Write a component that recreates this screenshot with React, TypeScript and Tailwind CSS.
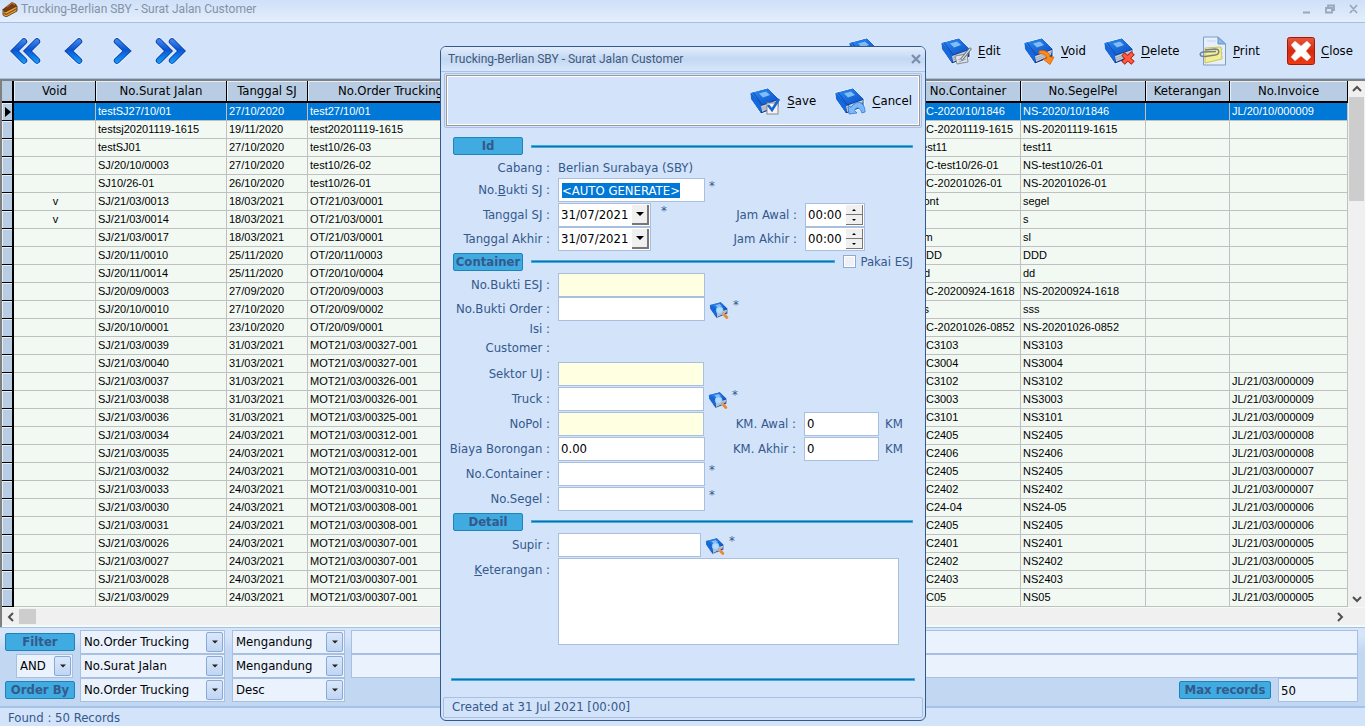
import { useEffect, useRef, type ReactNode } from "react";

const columns = [
  { label: "Void", width: "w-[82px]" },
  { label: "No.Surat Jalan", width: "w-[131px]" },
  { label: "Tanggal SJ", width: "w-[81px]" },
  { label: "No.Order Trucking", width: "w-[166px]" },
  { label: "", width: "w-auto" },
  { label: "No.Container", width: "w-[105px]" },
  { label: "No.SegelPel", width: "w-[125px]" },
  { label: "Keterangan", width: "w-[84px]" },
  { label: "No.Invoice", width: "w-[118px]" },
];

// void, no surat jalan, tanggal, no order, no container, no segel, no invoice
const rows = [
  ["", "testSJ27/10/01", "27/10/2020", "test27/10/01", "NC-2020/10/1846", "NS-2020/10/1846", "JL/20/10/000009"],
  ["", "testsj20201119-1615", "19/11/2020", "test20201119-1615", "NC-20201119-1615", "NS-20201119-1615", ""],
  ["", "testSJ01", "27/10/2020", "test10/26-03", "test11", "test11", ""],
  ["", "SJ/20/10/0003", "27/10/2020", "test10/26-02", "NC-test10/26-01", "NS-test10/26-01", ""],
  ["", "SJ10/26-01", "26/10/2020", "test10/26-01", "NC-20201026-01", "NS-20201026-01", ""],
  ["v", "SJ/21/03/0013", "18/03/2021", "OT/21/03/0001", "cont", "segel", ""],
  ["v", "SJ/21/03/0014", "18/03/2021", "OT/21/03/0001", "s", "s", ""],
  ["", "SJ/21/03/0017", "18/03/2021", "OT/21/03/0001", "cm", "sl", ""],
  ["", "SJ/20/11/0010", "25/11/2020", "OT/20/11/0003", "DDD", "DDD", ""],
  ["", "SJ/20/11/0014", "25/11/2020", "OT/20/10/0004", "dd", "dd", ""],
  ["", "SJ/20/09/0003", "27/09/2020", "OT/20/09/0003", "NC-20200924-1618", "NS-20200924-1618", ""],
  ["", "SJ/20/10/0010", "27/10/2020", "OT/20/09/0002", "ss", "sss", ""],
  ["", "SJ/20/10/0001", "23/10/2020", "OT/20/09/0001", "NC-20201026-0852", "NS-20201026-0852", ""],
  ["", "SJ/21/03/0039", "31/03/2021", "MOT21/03/00327-001", "NC3103", "NS3103", ""],
  ["", "SJ/21/03/0040", "31/03/2021", "MOT21/03/00327-001", "NC3004", "NS3004", ""],
  ["", "SJ/21/03/0037", "31/03/2021", "MOT21/03/00326-001", "NC3102", "NS3102", "JL/21/03/000009"],
  ["", "SJ/21/03/0038", "31/03/2021", "MOT21/03/00326-001", "NC3003", "NS3003", "JL/21/03/000009"],
  ["", "SJ/21/03/0036", "31/03/2021", "MOT21/03/00325-001", "NC3101", "NS3101", "JL/21/03/000009"],
  ["", "SJ/21/03/0034", "24/03/2021", "MOT21/03/00312-001", "NC2405", "NS2405", "JL/21/03/000008"],
  ["", "SJ/21/03/0035", "24/03/2021", "MOT21/03/00312-001", "NC2406", "NS2406", "JL/21/03/000008"],
  ["", "SJ/21/03/0032", "24/03/2021", "MOT21/03/00310-001", "NC2405", "NS2405", "JL/21/03/000007"],
  ["", "SJ/21/03/0033", "24/03/2021", "MOT21/03/00310-001", "NC2402", "NS2402", "JL/21/03/000007"],
  ["", "SJ/21/03/0030", "24/03/2021", "MOT21/03/00308-001", "NC24-04", "NS24-05", "JL/21/03/000006"],
  ["", "SJ/21/03/0031", "24/03/2021", "MOT21/03/00308-001", "NC2405", "NS2405", "JL/21/03/000006"],
  ["", "SJ/21/03/0026", "24/03/2021", "MOT21/03/00307-001", "NC2401", "NS2401", "JL/21/03/000005"],
  ["", "SJ/21/03/0027", "24/03/2021", "MOT21/03/00307-001", "NC2402", "NS2402", "JL/21/03/000005"],
  ["", "SJ/21/03/0028", "24/03/2021", "MOT21/03/00307-001", "NC2403", "NS2403", "JL/21/03/000005"],
  ["", "SJ/21/03/0029", "24/03/2021", "MOT21/03/00307-001", "NC05", "NS05", "JL/21/03/000005"],
];

const box = "border border-[#a9bfe0] outline-none";

/* ---------- icons ---------- */

function Defs() {
  return (
    <svg className="absolute size-0" aria-hidden="true">
      <defs>
        <linearGradient id="nav" x1="0" y1="0" x2="0" y2="28" gradientUnits="userSpaceOnUse">
          <stop offset="0" stopColor="#4d96f2" />
          <stop offset="0.45" stopColor="#0a55d0" />
          <stop offset="1" stopColor="#12a8ff" />
        </linearGradient>
        <linearGradient id="cover" x1="0" y1="0" x2="1" y2="1">
          <stop offset="0" stopColor="#2f8df0" />
          <stop offset="1" stopColor="#0a4fc8" />
        </linearGradient>
        <linearGradient id="red" x1="0" y1="0" x2="0" y2="1">
          <stop offset="0" stopColor="#e8583c" />
          <stop offset="0.5" stopColor="#d62a10" />
          <stop offset="1" stopColor="#f03a14" />
        </linearGradient>
      </defs>
    </svg>
  );
}

function NavIcon({ double, flip }: { double?: boolean; flip?: boolean }) {
  const d = double ? "M14 4.500 L4.500 14 L14 23.500 M27 4.500 L17.500 14 L27 23.500" : "M21 4.500 L11 14 L21 23.500";
  return (
    <svg viewBox="0 0 32 28" className={flip ? "h-7 w-8 -scale-x-100" : "h-7 w-8"} fill="none">
      <path d={d} stroke="#fff" strokeWidth="8" strokeLinejoin="round" strokeLinecap="round" opacity="0.600" />
      <path d={d} stroke="#0a40b4" strokeWidth="6.500" strokeLinejoin="miter" strokeLinecap="round" />
      <path d={d} stroke="url(#nav)" strokeWidth="4.800" strokeLinejoin="miter" strokeLinecap="round" />
    </svg>
  );
}

function BookIcon({ children, className = "h-7 w-8" }: { children?: ReactNode; className?: string }) {
  return (
    <svg viewBox="0 0 32 28" className={className} fill="none">
      <path d="M1 6 L19 1 L30 12 V20 L12 27 L2 12 Z" fill="#0a3c9c" stroke="#f4f8ff" strokeWidth="1" strokeLinejoin="round" />
      <path d="M12 19 L29 13 L28 18 L13 25 Z" fill="#c9ced6" />
      <path d="M13 21 L28 15.500 M13 23 L28 17" stroke="#8d96a5" strokeWidth="0.600" />
      <path d="M1.500 6 L19 1.500 L29.500 12 L12 18 Z" fill="url(#cover)" />
      <path d="M1.500 6 L12 18 L12 26 L2 12 Z" fill="#1569dc" />
      <path d="M4 5.500 L13 17.500" stroke="#0a3fa8" strokeWidth="0.800" />
      <path d="M10 6.500 L17 4.500 L21 8 L14 10.500 Z" fill="#7fbdf8" />
      {children}
    </svg>
  );
}

const EditMark = () => (
  <>
    <path d="M15 19 L27 17 L28 25 L17 27 Z" fill="#dfe3e8" stroke="#868e99" />
    <path d="M18 23 L24 20 M19 25 L26 22" stroke="#9aa3ae" />
    <path d="M22 22 L30 12" stroke="#6e7782" strokeWidth="3" strokeLinecap="round" />
    <path d="M22 22 L30 12" stroke="#e7ebf0" strokeWidth="1.200" strokeLinecap="round" />
  </>
);

const VoidMark = () => (
  <path d="M16 14 C22 12 27 16 27 20 L31 20 L27 27.500 L20 22 L24 21 C23 18 20 16 16 17 Z" fill="#ff8a1c" stroke="#d65c00" strokeWidth="0.800" />
);

const DeleteMark = () => (
  <>
    <path d="M20 17 L30 26 M30 16 L20 26" stroke="#a81208" strokeWidth="5" />
    <path d="M20.500 17.500 L29.500 25.500 M29.500 16.500 L20.500 25.500" stroke="#ff5a3c" strokeWidth="3.400" />
  </>
);

const SaveMark = () => (
  <>
    <rect x="18" y="16" width="11" height="11" fill="#f4f4f4" stroke="#8a8a8a" />
    <path d="M19 18 L23 23 L30 12" stroke="#1766d4" strokeWidth="2.600" />
  </>
);

const CancelMark = () => (
  <path d="M14 18 L15 27 L23 26 L20.500 23.500 C22 20 26 19.500 28 26 L31 25 C31 14 22 12.500 17 20.500 Z" fill="#7db8f8" stroke="#2e77d0" strokeWidth="0.800" />
);

function LookupIcon() {
  return (
    <BookIcon className="h-[18px] w-5">
      <circle cx="17" cy="14.500" r="5.500" fill="#b5dbfa" stroke="#8cc4f2" strokeWidth="1.500" />
      <path d="M23 20 L28.500 26" stroke="#e88a35" strokeWidth="4.500" strokeLinecap="round" />
      <path d="M21 18.500 L24 21.500" stroke="#b9b4b0" strokeWidth="3" />
    </BookIcon>
  );
}

function PrintIcon() {
  return (
    <svg viewBox="0 0 28 30" className="h-[30px] w-7" fill="none">
      <path d="M4.500 1 H19 L26.500 8 V29 H4.500 Z" fill="#e6f0fc" stroke="#7e9cc8" />
      <path d="M19 1 L19 8 H26.500 Z" fill="#8fb8ec" stroke="#6b93c8" />
      <path d="M8 5 H17 M21 13 H24 M21 17 H24 M21 21 H24" stroke="#c3d5ee" />
      <path d="M6 12 L22 11 L23 23 L6 27 Z" fill="#f3ef8e" stroke="#c2bb48" strokeWidth="0.800" />
      <path d="M6 14 L16 13 C21 13 21 18 16 19 L6 20.500 C0 21 0 16.500 4 16 L17 15.500" stroke="#77808c" strokeWidth="1.500" />
    </svg>
  );
}

function CloseIcon() {
  return (
    <svg viewBox="0 0 28 28" className="size-7" fill="none">
      <rect x="0.500" y="0.500" width="27" height="27" rx="2" fill="url(#red)" stroke="#a81606" />
      <path
        d="M4 8 L8 4 L14 9 L20 4 L24 8 L19 14 L24 20 L20 24 L14 19 L8 24 L4 20 L9 14 Z"
        fill="#fff"
        stroke="#f2c0b4"
        strokeWidth="0.500"
      />
    </svg>
  );
}

function CakeIcon() {
  return (
    <svg viewBox="0 0 16 16" className="size-4">
      <path d="M1 8 L10 1 L14 3 L15 5 L3 12 Z" fill="#7a3b14" />
      <path d="M1 8 L3 11 L15 5 V10 L4 16 L1 14 Z" fill="#e8a838" stroke="#4a2408" strokeWidth="0.800" />
      <path d="M2 12 L4 13.500 L15 7.500" stroke="#8a4a18" strokeWidth="1.200" fill="none" />
      <path d="M5 6 L10 2 L13 4" stroke="#b87848" strokeWidth="1" fill="none" />
    </svg>
  );
}

const Caret = ({ className = "" }: { className?: string }) => (
  <svg viewBox="0 0 8 4" className={`h-1 w-2 ${className}`}>
    <path d="M0 0 H8 L4 4 Z" fill="currentColor" />
  </svg>
);

const Chevron = ({ d }: { d: string }) => (
  <svg viewBox="0 0 10 10" className="size-[10px]" fill="none" stroke="#505050" strokeWidth="2">
    <path d={d} />
  </svg>
);

/* ---------- shared controls ---------- */

function ToolButton({ icon, label, className = "" }: { icon: ReactNode; label: string; className?: string }) {
  return (
    <button type="button" className={`flex shrink-0 items-center gap-[6px] text-left text-[13px] text-black ${className}`}>
      {icon}
      <span>
        <u className="underline-offset-2">{label[0]}</u>
        {label.slice(1)}
      </span>
    </button>
  );
}

function Badge({ children, className = "w-[70px]" }: { children: ReactNode; className?: string }) {
  return (
    <span
      className={`flex h-[18px] shrink-0 items-center justify-center rounded-xs border border-[#1c84bb] bg-[#40abe0] text-[13px] font-bold text-[#34598c] ${className}`}
    >
      {children}
    </span>
  );
}

function Combo({ label, value, className = "" }: { label: string; value: string; className?: string }) {
  return (
    <div className={`relative h-6 ${className}`}>
      <select aria-label={label} className={`${box} size-full appearance-none bg-[#eaf2fd] pl-[3px] text-[13px] text-black`}>
        <option>{value}</option>
      </select>
      <span className="pointer-events-none absolute top-0.5 right-0.5 bottom-0.5 flex w-[17px] items-center justify-center rounded-xs border border-[#8aa9d6] bg-linear-to-b from-[#dbe8fa] to-[#bfd5f2] text-[#222]">
        <Caret className="w-[6px]" />
      </span>
    </div>
  );
}

function Section({ title, children }: { title: string; children?: ReactNode }) {
  return (
    <div className="flex items-center gap-2 pr-3 pl-3">
      <Badge>{title}</Badge>
      <Rule className="flex-1" />
      {children}
    </div>
  );
}

const Rule = ({ className = "" }: { className?: string }) => (
  <div className={`h-[3px] border border-[#40abe0] bg-[#1570a8] ${className}`} />
);

const Star = () => <span className="-ml-1 self-start text-[13px] leading-4">*</span>;

function Field({ label, id, className = "h-[25px]", children }: { label: ReactNode; id?: string; className?: string; children?: ReactNode }) {
  return (
    <div className={`flex items-start gap-2 ${className}`}>
      <label htmlFor={id} className="flex h-full max-h-6 w-[109px] shrink-0 items-center justify-end whitespace-nowrap">
        {label} :
      </label>
      {children}
    </div>
  );
}

const Text = ({ id, value = "", className = "w-[147px] bg-white" }: { id: string; value?: string; className?: string }) => (
  <input id={id} type="text" defaultValue={value} className={`${box} h-6 px-0.5 text-[13px] text-black ${className}`} />
);

function DateBox({ id }: { id: string }) {
  return (
    <div className={`${box} flex h-6 w-[93px] shrink-0 bg-white p-px`}>
      <input id={id} type="text" defaultValue="31/07/2021" className="w-0 flex-1 pl-px text-[13px] text-black outline-none" />
      <button
        type="button"
        aria-label="Open calendar"
        className="flex w-[17px] items-center justify-center border-r-2 border-b-2 border-[#777] bg-[#f0f0f0] text-black"
      >
        <Caret />
      </button>
    </div>
  );
}

function TimeRow({ id, label }: { id: string; label: string }) {
  const spin = "flex h-[10px] items-center justify-center border-r border-b border-[#777] bg-[#f0f0f0] text-black";
  return (
    <>
      <label htmlFor={id} className="flex h-6 w-[71px] items-center justify-end whitespace-nowrap">
        {label} :
      </label>
      <div className={`${box} flex h-6 w-[60px] bg-white p-px`}>
        <input id={id} type="text" defaultValue="00:00" className="w-0 flex-1 pl-px text-[13px] text-black outline-none" />
        <div className="flex w-[17px] flex-col justify-between">
          <button type="button" aria-label={`${label} up`} className={spin}>
            <Caret className="h-[2px] w-1 rotate-180" />
          </button>
          <button type="button" aria-label={`${label} down`} className={spin}>
            <Caret className="h-[2px] w-1" />
          </button>
        </div>
      </div>
    </>
  );
}

function KmRow({ id, label }: { id: string; label: string }) {
  return (
    <>
      <label htmlFor={id} className="flex h-6 w-[70px] items-center justify-end whitespace-nowrap">
        {label} :
      </label>
      <div className="flex gap-[6px]">
        <Text id={id} value="0" className="w-[75px] bg-white" />
        <span className="flex h-6 items-center">KM</span>
      </div>
    </>
  );
}

const Lookup = ({ label }: { label: string }) => (
  <button type="button" aria-label={label} className="mt-1 -ml-1 shrink-0">
    <LookupIcon />
  </button>
);

/* ---------- main window ---------- */

function Grid() {
  return (
    <div className="border-t-2 border-l-2 border-[#808080] bg-[#f4faf4]">
      <div className="flex">
        <table className="w-0 flex-1 table-fixed border-separate border-spacing-0 font-['Liberation_Sans',Arial,sans-serif] text-[11px] text-black">
          <thead>
            <tr className="h-[22px] font-['DejaVu_Sans_Condensed','DejaVu_Sans',sans-serif] text-[13px]">
              <th className="w-3 border-r-2 border-b-2 border-black bg-[#b8cde3]" />
              {columns.map((c) => (
                <th
                  key={c.label}
                  className={`${c.width} overflow-hidden border-r border-b-2 border-black bg-[#b8cde3] p-0 leading-[18px] font-normal whitespace-nowrap shadow-[inset_1px_1px_0_#e6eef7]`}
                >
                  {c.label}
                </th>
              ))}
            </tr>
          </thead>
          <tbody>
            {rows.map((r, i) => {
              const cell = `border-r border-b border-[#c0c0c0] p-0 pl-0.5 leading-[17px] whitespace-nowrap overflow-hidden ${
                i === 0 ? "bg-[#0078d7] text-white" : "bg-[#f2f9f3]"
              }`;
              return (
                <tr key={r[1]} className="h-[18px]">
                  <td className="border-r-2 border-b border-black bg-[#b8cde3] p-0 shadow-[inset_1px_1px_0_#e6eef7]">
                    {i === 0 && (
                      <svg viewBox="0 0 6 10" className="ml-[3px] h-[10px] w-[6px]">
                        <path d="M0 0 L6 5 L0 10 Z" />
                      </svg>
                    )}
                  </td>
                  <td className={`${cell} text-center`}>{r[0]}</td>
                  <td className={cell}>{r[1]}</td>
                  <td className={cell}>{r[2]}</td>
                  <td className={cell}>{r[3]}</td>
                  <td className={cell} />
                  <td className={cell}>{r[4]}</td>
                  <td className={cell}>{r[5]}</td>
                  <td className={cell} />
                  <td className={cell}>{r[6]}</td>
                </tr>
              );
            })}
          </tbody>
        </table>
        <div className="flex w-[17px] flex-col items-center bg-[#f0f0f0]">
          <button type="button" aria-label="Scroll up" className="flex h-4 items-center">
            <Chevron d="M1 7 L5 3 L9 7" />
          </button>
          <div className="h-[104px] w-[15px] bg-[#cdcdcd]" />
          <button type="button" aria-label="Scroll down" className="mt-auto flex h-4 items-center">
            <Chevron d="M1 3 L5 7 L9 3" />
          </button>
        </div>
      </div>
      <div className="mt-px mb-0.5 flex h-[17px] items-center bg-[#f0f0f0] pr-[20px]">
        <button type="button" aria-label="Scroll left" className="flex w-[17px] justify-center">
          <Chevron d="M7 1 L3 5 L7 9" />
        </button>
        <div className="h-[15px] w-[17px] bg-[#cdcdcd]" />
        <button type="button" aria-label="Scroll right" className="ml-auto">
          <Chevron d="M3 1 L7 5 L3 9" />
        </button>
      </div>
    </div>
  );
}

function FilterBar() {
  return (
    <div className="flex items-start border-t border-b-2 border-[#a4c3e8] bg-linear-to-b from-[#d6e5f9] from-10% to-[#c1d7f2] to-30% pt-0.5 pr-[7px] pb-1 pl-[5px]">
      <div className="flex w-[75px] flex-col">
        <div className="flex h-6 items-center">
          <Badge>Filter</Badge>
        </div>
        <Combo label="Operator" value="AND" className="ml-[11px] w-[57px]" />
        <div className="flex h-6 items-center">
          <Badge>Order By</Badge>
        </div>
      </div>
      <div className="w-[145px]">
        <Combo label="Filter field 1" value="No.Order Trucking" />
        <Combo label="Filter field 2" value="No.Surat Jalan" />
        <Combo label="Order field" value="No.Order Trucking" />
      </div>
      <div className="ml-[7px] w-[113px]">
        <Combo label="Condition 1" value="Mengandung" />
        <Combo label="Condition 2" value="Mengandung" />
        <Combo label="Order direction" value="Desc" />
      </div>
      <div className="ml-[6px] flex flex-1 flex-col">
        <input aria-label="Filter value 1" type="text" className={`${box} h-6 bg-[#eaf2fd]`} />
        <input aria-label="Filter value 2" type="text" className={`${box} h-6 bg-[#eaf2fd]`} />
        <label className="flex items-center justify-end gap-[7px]">
          <Badge className="w-[92px]">Max records</Badge>
          <input type="text" defaultValue="50" className={`${box} h-6 w-20 bg-[#eaf2fd] px-0.5 text-[13px] text-black`} />
        </label>
      </div>
    </div>
  );
}

/* ---------- entry dialog ---------- */

function EntryDialog() {
  const bukti = useRef<HTMLInputElement>(null);

  useEffect(() => {
    bukti.current?.focus();
    bukti.current?.select();
  }, []);

  return (
    <div role="dialog" aria-label="Surat Jalan Customer" className="w-[486px] overflow-hidden rounded-md border border-[#34598c] bg-[#d3e3fa]">
      <div className="flex h-[25px] items-center justify-between border-b border-[#a9c4e8] bg-linear-to-b from-[#e3edfb] via-[#c3d8f4] to-[#d8e7fb] pr-1 pl-[7px] font-[Roboto,sans-serif] text-[12px] text-[#44597a]">
        <span>Trucking-Berlian SBY - Surat Jalan Customer</span>
        <button type="button" aria-label="Close dialog">
          <svg viewBox="0 0 10 10" className="size-[10px]" stroke="#7b8da8" strokeWidth="2.200">
            <path d="M1 1 L9 9 M9 1 L1 9" />
          </svg>
        </button>
      </div>

      <div className="mx-[3px] mt-px rounded-xs border border-[#a9c0e2] p-px">
        <div className="flex h-[51px] items-center border border-[#9a9a9a] pr-[7px] shadow-[inset_1px_1px_0_#fff,inset_-1px_-1px_0_#fff]">
          <ToolButton icon={<BookIcon><SaveMark /></BookIcon>} label="Save" className="ml-auto w-[85px]" />
          <ToolButton icon={<BookIcon><CancelMark /></BookIcon>} label="Cancel" />
        </div>
      </div>

      <form className="pt-[9px]">
        <Section title="Id" />
        <Field label="Cabang" className="mt-[3px] h-5">
          <span className="flex h-5 items-center">Berlian Surabaya (SBY)</span>
        </Field>
        <Field label={<>No.<u>B</u>ukti SJ</>} id="bukti" className="h-[25px]">
          <input
            ref={bukti}
            id="bukti"
            type="text"
            defaultValue="<AUTO GENERATE>"
            className={`${box} h-6 w-[147px] bg-white px-[3px] text-[13px] text-black selection:bg-[#0078d7] selection:text-white`}
          />
          <Star />
        </Field>
        <Field label="Tanggal SJ" id="tgl-sj" className="h-6">
          <div className="flex w-[160px] gap-[14px]">
            <DateBox id="tgl-sj" />
            <Star />
          </div>
          <TimeRow id="jam-awal" label="Jam Awal" />
        </Field>
        <Field label="Tanggal Akhir" id="tgl-akhir" className="mb-px h-6">
          <div className="w-[160px]">
            <DateBox id="tgl-akhir" />
          </div>
          <TimeRow id="jam-akhir" label="Jam Akhir" />
        </Field>

        <Section title="Container">
          <label className="flex items-center gap-1">
            <input type="checkbox" className="size-[13px] appearance-none border border-[#8fa9cf] bg-[#eef2f6] shadow-[inset_0_0_0_1px_#fff]" />
            Pakai ESJ
          </label>
        </Section>
        <Field label="No.Bukti ESJ" id="esj" className="mt-px h-6">
          <Text id="esj" className="w-[147px] bg-[#ffffe1]" />
        </Field>
        <Field label="No.Bukti Order" id="order" className="h-6">
          <Text id="order" />
          <Lookup label="Cari order" />
          <Star />
        </Field>
        <Field label="Isi" className="h-4" />
        <Field label="Customer" className="mb-[3px] h-[22px]" />
        <Field label="Sektor UJ" id="sektor">
          <Text id="sektor" className="w-[146px] bg-[#ffffe1]" />
        </Field>
        <Field label="Truck" id="truck">
          <Text id="truck" className="w-[146px] bg-white" />
          <Lookup label="Cari truck" />
          <Star />
        </Field>
        <Field label="NoPol" id="nopol">
          <div className="w-[160px]">
            <Text id="nopol" className="w-[146px] bg-[#ffffe1]" />
          </div>
          <KmRow id="km-awal" label="KM. Awal" />
        </Field>
        <Field label="Biaya Borongan" id="biaya">
          <div className="w-[160px]">
            <Text id="biaya" value="0.00" />
          </div>
          <KmRow id="km-akhir" label="KM. Akhir" />
        </Field>
        <Field label="No.Container" id="container">
          <Text id="container" />
          <Star />
        </Field>
        <Field label="No.Segel" id="segel">
          <Text id="segel" />
          <Star />
        </Field>

        <div className="pt-px">
          <Section title="Detail" />
        </div>
        <Field label="Supir" id="supir" className="mt-0.5 h-[25px]">
          <Text id="supir" className="w-[143px] bg-white" />
          <Lookup label="Cari supir" />
          <Star />
        </Field>
        <Field label={<><u>K</u>eterangan</>} id="ket" className="h-[87px]">
          <textarea id="ket" className={`${box} h-full w-[341px] resize-none bg-white`} />
        </Field>
        <Rule className="mx-[10px] mt-[33px]" />
      </form>

      <div className="mx-0.5 mt-4 mb-0.5 flex h-[21px] items-center rounded-xs border border-[#a9c0e2] pl-2">
        Created at 31 Jul 2021 [00:00]
      </div>
    </div>
  );
}

export default function App() {
  return (
    <div className="relative flex min-h-screen flex-col overflow-hidden bg-[#d3e3fa] font-['DejaVu_Sans_Condensed','DejaVu_Sans',sans-serif] text-[13px] text-[#34598c]">
      <Defs />
      <header className="flex h-[22px] items-center bg-linear-to-b from-[#cfe0f8] to-[#e4eefc] pr-[6px] pb-1 pl-0.5 font-[Roboto,sans-serif] text-[12px] text-[#8492a6]">
        <CakeIcon />
        <span className="ml-[3px] flex-1 leading-4">Trucking-Berlian SBY - Surat Jalan Customer</span>
        <svg viewBox="0 0 58 12" className="h-3 w-[58px]" fill="none" stroke="#9aa7ba" strokeWidth="1.800">
          <path d="M2 9.500 H9 M25 5 H31 V9.500 H25 Z M27 5 V2.500 H33 V7 H31 M49 2 L56 10 M56 2 L49 10" />
        </svg>
      </header>

      <nav className="flex h-[57px] items-center border-y border-[#a4bfe3] pl-[10px]">
        <button type="button" aria-label="First record" className="w-12"><NavIcon double /></button>
        <button type="button" aria-label="Previous record" className="w-12"><NavIcon /></button>
        <button type="button" aria-label="Next record" className="w-12"><NavIcon flip /></button>
        <button type="button" aria-label="Last record"><NavIcon double flip /></button>
        <ToolButton icon={<BookIcon />} label="New" className="ml-auto w-[92px]" />
        <ToolButton icon={<BookIcon><EditMark /></BookIcon>} label="Edit" className="w-[83px]" />
        <ToolButton icon={<BookIcon><VoidMark /></BookIcon>} label="Void" className="w-20" />
        <ToolButton icon={<BookIcon><DeleteMark /></BookIcon>} label="Delete" className="w-24" />
        <ToolButton icon={<PrintIcon />} label="Print" className="w-[88px]" />
        <ToolButton icon={<CloseIcon />} label="Close" className="w-[78px]" />
      </nav>

      <Grid />
      <FilterBar />
      <footer className="flex h-5 items-center pl-2">Found : 50 Records</footer>

      {/* modal floats over the list */}
      <div className="absolute inset-0 flex items-start justify-center pt-[46px] pl-px">
        <EntryDialog />
      </div>
    </div>
  );
}
